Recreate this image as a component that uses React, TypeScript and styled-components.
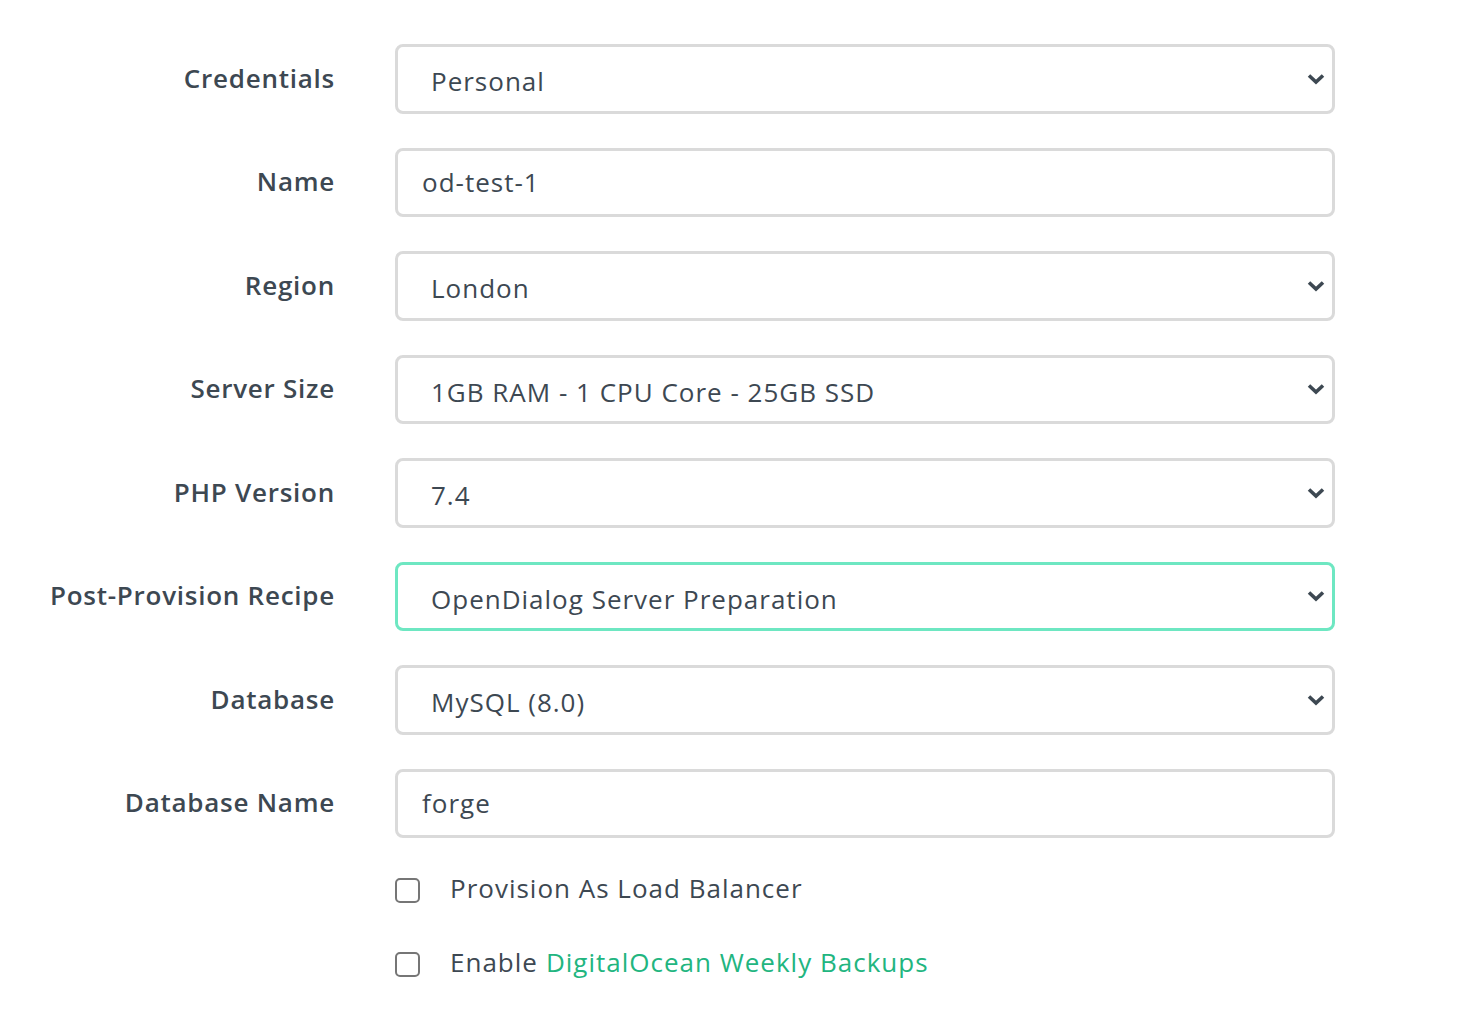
import React from "react";
import styled, { createGlobalStyle } from "styled-components";

const Global = createGlobalStyle`
  html, body { margin: 0; padding: 0; background: #ffffff; }
  body { font-family: "Open Sans", "Noto Sans", "Liberation Sans", sans-serif; color: #3d4852; }
  * { box-sizing: border-box; }
`;

const Form = styled.form`
  display: grid;
  grid-template-columns: 334px 940px;
  column-gap: 61px;
  padding: 44px 0 0 0;
`;

const Label = styled.label`
  grid-column: 1;
  height: 69.5px;
  margin-bottom: 34px;
  display: flex;
  align-items: center;
  justify-content: flex-end;
  font-size: 26px;
  letter-spacing: 0.75px;
  font-weight: 600;
  color: #3d4852;
  padding-bottom: 2px;
  margin-right: -1px;
  white-space: nowrap;
`;

const Field = styled.div`
  grid-column: 2;
  position: relative;
  height: 69.5px;
  margin-bottom: 34px;
`;

const TextInput = styled.input`
  width: 100%;
  height: 100%;
  border: 3px solid #dadada;
  border-radius: 8px;
  padding: 0 24px;
  font-family: inherit;
  font-size: 26px;
  letter-spacing: 1px;
  color: #3d4852;
  background: #fff;
  outline: none;
`;

const Select = styled.select<{ $focused?: boolean }>`
  appearance: none;
  -webkit-appearance: none;
  width: 100%;
  height: 100%;
  border: 3px solid ${(p) => (p.$focused ? "#6ee7c2" : "#dadada")};
  border-radius: 8px;
  padding: 5px 60px 0 33px;
  font-family: inherit;
  font-size: 26px;
  letter-spacing: 1px;
  color: #3d4852;
  background: #fff;
  outline: none;
`;

const Chevron = styled.svg`
  position: absolute;
  right: 10px;
  top: 50%;
  transform: translateY(-50%);
  width: 18px;
  height: 12px;
  pointer-events: none;
`;

const CheckRow = styled.label<{ $first?: boolean }>`
  grid-column: 2;
  display: flex;
  align-items: center;
  gap: 30px;
  height: 40px;
  margin-top: ${(p) => (p.$first ? "-4px" : "0")};
  margin-bottom: 34px;
  font-size: 26px;
  letter-spacing: 1px;
  color: #3d4852;
  white-space: nowrap;
`;

const Box = styled.span`
  width: 25px;
  height: 25px;
  border: 2px solid #767676;
  border-radius: 5px;
  margin-top: 4px;
  flex: none;
`;

const Link = styled.a`
  color: #22b57f;
  text-decoration: none;
  margin-left: 8px;
`;

const ChevronIcon = () => (
  <Chevron viewBox="0 0 18 12">
    <path d="M2 2.5 L9 9 L16 2.5" fill="none" stroke="#3d4852" strokeWidth="3.6" />
  </Chevron>
);

const SelectField = ({ value, focused }: { value: string; focused?: boolean }) => (
  <Field>
    <Select $focused={focused} defaultValue={value}>
      <option>{value}</option>
    </Select>
    <ChevronIcon />
  </Field>
);

export default function App() {
  return (
    <>
      <Global />
      <Form onSubmit={(e) => e.preventDefault()}>
        <Label>Credentials</Label>
        <SelectField value="Personal" />
        <Label>Name</Label>
        <Field>
          <TextInput defaultValue="od-test-1" />
        </Field>
        <Label>Region</Label>
        <SelectField value="London" />
        <Label>Server Size</Label>
        <SelectField value="1GB RAM - 1 CPU Core - 25GB SSD" />
        <Label>PHP Version</Label>
        <SelectField value="7.4" />
        <Label>Post-Provision Recipe</Label>
        <SelectField value="OpenDialog Server Preparation" focused />
        <Label>Database</Label>
        <SelectField value="MySQL (8.0)" />
        <Label>Database Name</Label>
        <Field>
          <TextInput defaultValue="forge" />
        </Field>
        <CheckRow $first>
          <Box />
          <span>Provision As Load Balancer</span>
        </CheckRow>
        <CheckRow>
          <Box />
          <span>
            Enable<Link href="#">DigitalOcean Weekly Backups</Link>
          </span>
        </CheckRow>
      </Form>
    </>
  );
}
